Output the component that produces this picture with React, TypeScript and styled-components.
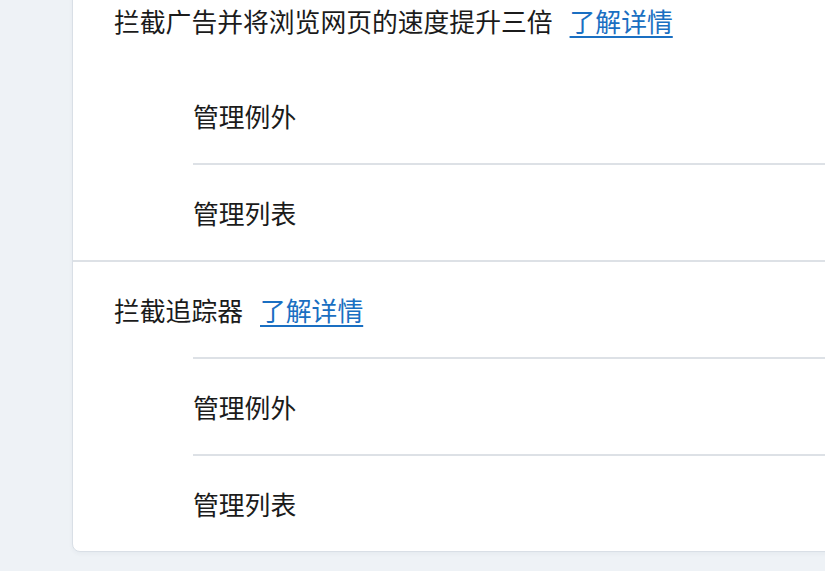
import React from "react";
import styled, { createGlobalStyle } from "styled-components";

const Global = createGlobalStyle`
  html, body {
    margin: 0;
    padding: 0;
    background: #eef2f6;
    overflow: hidden;
    width: 825px;
    height: 571px;
  }
  body {
    font-family: "Noto Sans CJK SC", "Noto Sans", sans-serif;
    color: #1b1b1b;
  }
`;

const Page = styled.div`
  margin-top: -28px;
  padding-left: 72px;
`;

const Card = styled.div`
  width: 900px;
  background: #ffffff;
  border: 1px solid #d9dfe6;
  border-radius: 8px;
  box-shadow: 0 2px 4px rgba(30, 50, 80, 0.04);
`;

const Section = styled.div<{ $first?: boolean }>`
  border-top: ${(p) => (p.$first ? "none" : "2px solid #dde1e6")};
`;

const HeaderRow = styled.div`
  height: 95px;
  display: flex;
  align-items: center;
  padding-left: 41px;
  font-size: 25.8px;
  line-height: 1;
`;

const Link = styled.a`
  margin-left: 17px;
  color: #1a6fc2;
  text-decoration: underline;
  text-underline-offset: 4px;
  text-decoration-thickness: 2px;
  cursor: pointer;
`;

const SubList = styled.div`
  margin-left: 120px;
`;

const SubRow = styled.div<{ $divider?: boolean }>`
  height: 95px;
  display: flex;
  align-items: center;
  font-size: 25.8px;
  line-height: 1;
  border-top: ${(p) => (p.$divider ? "2px solid #dde1e6" : "none")};
`;

export default function App() {
  return (
    <>
      <Global />
      <Page>
        <Card>
          <Section $first>
            <HeaderRow>
              拦截广告并将浏览网页的速度提升三倍
              <Link>了解详情</Link>
            </HeaderRow>
            <SubList>
              <SubRow>管理例外</SubRow>
              <SubRow $divider>管理列表</SubRow>
            </SubList>
          </Section>
          <Section>
            <HeaderRow>
              拦截追踪器
              <Link>了解详情</Link>
            </HeaderRow>
            <SubList>
              <SubRow $divider>管理例外</SubRow>
              <SubRow $divider>管理列表</SubRow>
            </SubList>
          </Section>
        </Card>
      </Page>
    </>
  );
}
